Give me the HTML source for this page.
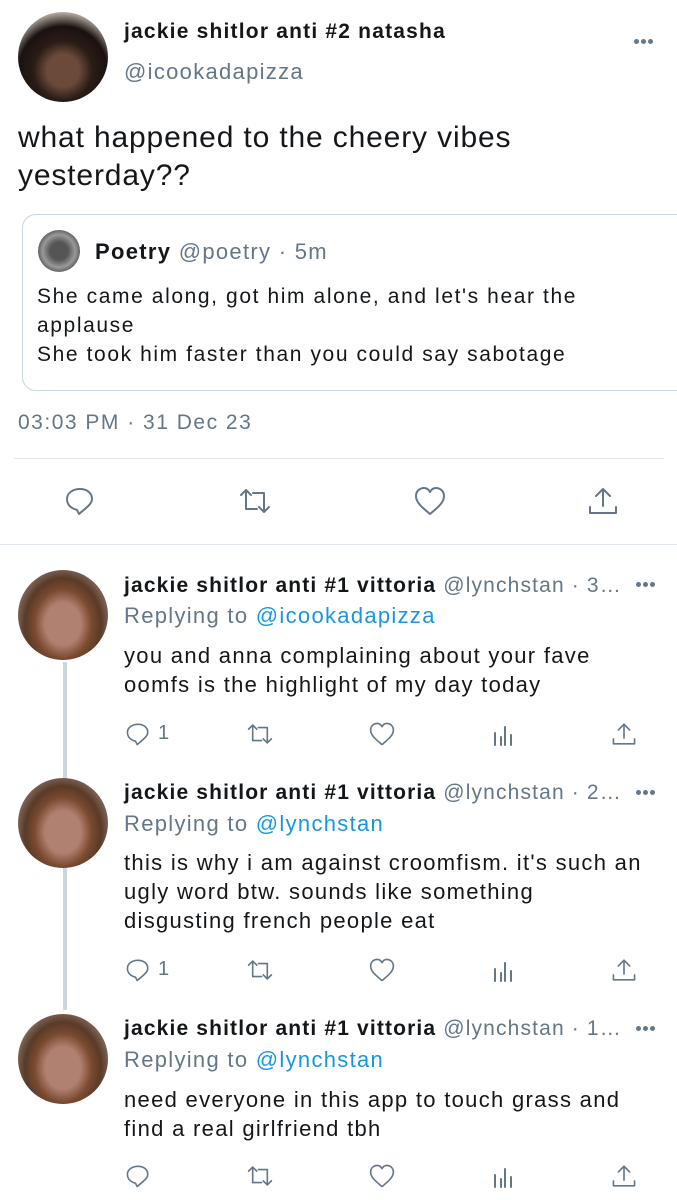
<!DOCTYPE html>
<html><head><meta charset="utf-8"><style>
*{margin:0;padding:0;box-sizing:border-box}
body{width:677px;height:1200px;background:#fff;position:relative;overflow:hidden;font-family:"Liberation Sans",sans-serif;color:#14171a;letter-spacing:1.3px}
.a{position:absolute;white-space:nowrap}
.av{position:absolute;border-radius:50%;overflow:hidden}
.g{color:#657786}
.b{color:#1b95e0}
.bold{font-weight:bold}
svg{position:absolute;fill:none;stroke:#657786;stroke-width:2;stroke-linecap:round;stroke-linejoin:round}
.hr{position:absolute;height:1px;background:#e1e8ed}
.dots{position:absolute;width:22px;height:6px}
.dots i{position:absolute;top:0;width:5px;height:5px;border-radius:50%;background:#657786}
</style></head><body>

<div class="av" style="left:18px;top:12px;width:90px;height:90px;background:radial-gradient(circle at 50% 65%,#6b4a3a 0 22%,#2a1c16 40%,#1a1210 60%,#bfb6ad 80%)"></div>
<div class="a bold" style="left:124px;top:20px;font-size:21px;letter-spacing:1.2px">jackie shitlor anti #2 natasha</div>
<div class="a g" style="left:124px;top:59px;font-size:22px">@icookadapizza</div>
<div class="dots" style="left:634px;top:39px"><i style="left:0"></i><i style="left:7px"></i><i style="left:14px"></i></div>

<div class="a" style="left:18px;top:119px;font-size:30px;line-height:38px;letter-spacing:0.85px">what happened to the cheery vibes<br>yesterday??</div>

<div style="position:absolute;left:22px;top:214px;width:670px;height:177px;border:1px solid #ccd6dd;border-radius:14px"></div>
<div class="av" style="left:38px;top:230px;width:42px;height:42px;background:radial-gradient(circle,#555 0 30%,#999 55%,#444 80%)"></div>
<div class="a" style="left:95px;top:239px;font-size:22px"><span class="bold">Poetry</span> <span class="g">@poetry · 5m</span></div>
<div class="a" style="left:37px;top:282px;font-size:21px;line-height:29px;letter-spacing:1.6px">She came along, got him alone, and let's hear the<br>applause<br>She took him faster than you could say sabotage</div>

<div class="a g" style="left:18px;top:411px;font-size:21px;letter-spacing:1.5px">03:03 PM · 31 Dec 23</div>
<div class="hr" style="left:14px;top:458px;width:650px"></div>

<svg style="left:64px;top:485px" width="32" height="32" viewBox="0 0 32 32"><path d="M13 25 C6 23 3 19 3 14 C3 8 9 4 16 4 C23 4 28 8 28 14 C28 19 22 23 15 29 Z"/></svg>
<svg style="left:237px;top:485px" width="36" height="32" viewBox="0 0 36 32"><path d="M4 10 L9 5 L14 10 M9 5 V24 H20 M32 22 L27 27 L22 22 M27 27 V8 H16"/></svg>
<svg style="left:413px;top:485px" width="34" height="32" viewBox="0 0 34 32"><path d="M17 29 C10 23 3 18 3 11 C3 6 7 3 11 3 C14 3 16 5 17 7 C18 5 20 3 23 3 C27 3 31 6 31 11 C31 18 24 23 17 29 Z"/></svg>
<svg style="left:586px;top:485px" width="34" height="32" viewBox="0 0 34 32"><path d="M17 4 V21 M10 11 L17 4 L24 11 M4 22 V28 H30 V22"/></svg>
<div class="hr" style="left:0;top:544px;width:677px"></div>

<div style="position:absolute;left:63px;top:662px;width:4px;height:348px;background:#ccd6dd"></div>

<div class="av" style="left:18px;top:570px;width:90px;height:90px;background:radial-gradient(ellipse at 50% 60%,#b08070 0 28%,#7a4a30 45%,#5a3a28 60%,#9a8a80 85%)"></div>
<div class="a" style="left:124px;top:574px;font-size:21px;letter-spacing:1.15px"><span class="bold">jackie shitlor anti #1 vittoria</span> <span class="g">@lynchstan · 3…</span></div>
<div class="dots" style="left:636px;top:582px"><i style="left:0"></i><i style="left:7px"></i><i style="left:14px"></i></div>
<div class="a" style="left:124px;top:603px;font-size:22px"><span class="g">Replying to</span> <span class="b">@icookadapizza</span></div>
<div class="a" style="left:124px;top:641px;font-size:22px;line-height:29px">you and anna complaining about your fave<br>oomfs is the highlight of my day today</div>

<div class="av" style="left:18px;top:778px;width:90px;height:90px;background:radial-gradient(ellipse at 50% 60%,#b08070 0 28%,#7a4a30 45%,#5a3a28 60%,#9a8a80 85%)"></div>
<div class="a" style="left:124px;top:781px;font-size:21px;letter-spacing:1.15px"><span class="bold">jackie shitlor anti #1 vittoria</span> <span class="g">@lynchstan · 2…</span></div>
<div class="dots" style="left:636px;top:790px"><i style="left:0"></i><i style="left:7px"></i><i style="left:14px"></i></div>
<div class="a" style="left:124px;top:811px;font-size:22px"><span class="g">Replying to</span> <span class="b">@lynchstan</span></div>
<div class="a" style="left:124px;top:848px;font-size:22px;line-height:29px">this is why i am against croomfism. it's such an<br>ugly word btw. sounds like something<br>disgusting french people eat</div>

<div class="av" style="left:18px;top:1014px;width:90px;height:90px;background:radial-gradient(ellipse at 50% 60%,#b08070 0 28%,#7a4a30 45%,#5a3a28 60%,#9a8a80 85%)"></div>
<div class="a" style="left:124px;top:1017px;font-size:21px;letter-spacing:1.15px"><span class="bold">jackie shitlor anti #1 vittoria</span> <span class="g">@lynchstan · 1…</span></div>
<div class="dots" style="left:636px;top:1026px"><i style="left:0"></i><i style="left:7px"></i><i style="left:14px"></i></div>
<div class="a" style="left:124px;top:1047px;font-size:22px"><span class="g">Replying to</span> <span class="b">@lynchstan</span></div>
<div class="a" style="left:124px;top:1085px;font-size:22px;line-height:29px">need everyone in this app to touch grass and<br>find a real girlfriend tbh</div>

<div style="position:absolute;left:0;top:720px;width:677px;height:28px">
<svg style="left:125px;top:1px" width="26" height="26" viewBox="0 0 32 32"><path d="M13 25 C6 23 3 19 3 14 C3 8 9 4 16 4 C23 4 28 8 28 14 C28 19 22 23 15 29 Z"/></svg>
<div class="a g" style="left:158px;top:2px;font-size:20px">1</div>
<svg style="left:245px;top:1px" width="30" height="26" viewBox="0 0 36 32"><path d="M4 10 L9 5 L14 10 M9 5 V24 H20 M32 22 L27 27 L22 22 M27 27 V8 H16"/></svg>
<svg style="left:368px;top:1px" width="28" height="26" viewBox="0 0 34 32"><path d="M17 29 C10 23 3 18 3 11 C3 6 7 3 11 3 C14 3 16 5 17 7 C18 5 20 3 23 3 C27 3 31 6 31 11 C31 18 24 23 17 29 Z"/></svg>
<svg style="left:491px;top:3px" width="24" height="24" viewBox="0 0 24 24"><path d="M4 10 V22 M10 14 V22 M14 4 V22 M20 12 V22"/></svg>
<svg style="left:610px;top:1px" width="28" height="26" viewBox="0 0 34 32"><path d="M17 4 V21 M10 11 L17 4 L24 11 M4 22 V28 H30 V22"/></svg>
</div>
<div style="position:absolute;left:0;top:956px;width:677px;height:28px">
<svg style="left:125px;top:1px" width="26" height="26" viewBox="0 0 32 32"><path d="M13 25 C6 23 3 19 3 14 C3 8 9 4 16 4 C23 4 28 8 28 14 C28 19 22 23 15 29 Z"/></svg>
<div class="a g" style="left:158px;top:2px;font-size:20px">1</div>
<svg style="left:245px;top:1px" width="30" height="26" viewBox="0 0 36 32"><path d="M4 10 L9 5 L14 10 M9 5 V24 H20 M32 22 L27 27 L22 22 M27 27 V8 H16"/></svg>
<svg style="left:368px;top:1px" width="28" height="26" viewBox="0 0 34 32"><path d="M17 29 C10 23 3 18 3 11 C3 6 7 3 11 3 C14 3 16 5 17 7 C18 5 20 3 23 3 C27 3 31 6 31 11 C31 18 24 23 17 29 Z"/></svg>
<svg style="left:491px;top:3px" width="24" height="24" viewBox="0 0 24 24"><path d="M4 10 V22 M10 14 V22 M14 4 V22 M20 12 V22"/></svg>
<svg style="left:610px;top:1px" width="28" height="26" viewBox="0 0 34 32"><path d="M17 4 V21 M10 11 L17 4 L24 11 M4 22 V28 H30 V22"/></svg>
</div>
<div style="position:absolute;left:0;top:1162px;width:677px;height:28px">
<svg style="left:125px;top:1px" width="26" height="26" viewBox="0 0 32 32"><path d="M13 25 C6 23 3 19 3 14 C3 8 9 4 16 4 C23 4 28 8 28 14 C28 19 22 23 15 29 Z"/></svg>
<svg style="left:245px;top:1px" width="30" height="26" viewBox="0 0 36 32"><path d="M4 10 L9 5 L14 10 M9 5 V24 H20 M32 22 L27 27 L22 22 M27 27 V8 H16"/></svg>
<svg style="left:368px;top:1px" width="28" height="26" viewBox="0 0 34 32"><path d="M17 29 C10 23 3 18 3 11 C3 6 7 3 11 3 C14 3 16 5 17 7 C18 5 20 3 23 3 C27 3 31 6 31 11 C31 18 24 23 17 29 Z"/></svg>
<svg style="left:491px;top:3px" width="24" height="24" viewBox="0 0 24 24"><path d="M4 10 V22 M10 14 V22 M14 4 V22 M20 12 V22"/></svg>
<svg style="left:610px;top:1px" width="28" height="26" viewBox="0 0 34 32"><path d="M17 4 V21 M10 11 L17 4 L24 11 M4 22 V28 H30 V22"/></svg>
</div>
</body></html>
